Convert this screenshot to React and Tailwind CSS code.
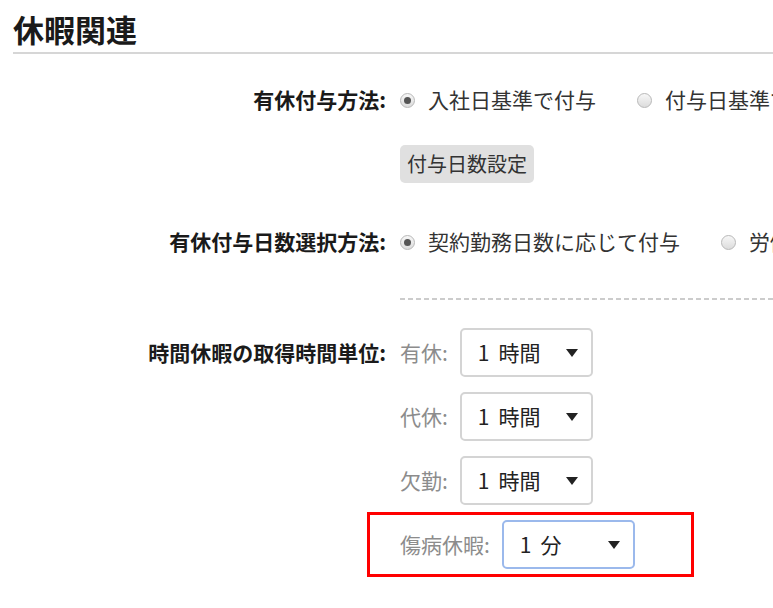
import React from "react";

const font = { fontFamily: '"Noto Sans CJK JP", "Noto Sans", sans-serif' };

function Radio({ checked, label }) {
    return (
        <label className="flex items-center gap-[13px] whitespace-nowrap shrink-0">
            <span className="w-[15px] h-[15px] rounded-full border border-[#b8b8b8] bg-[linear-gradient(#f7f7f7,#dcdcdc)] flex items-center justify-center shrink-0">
                {checked && <span className="w-[7px] h-[7px] rounded-full bg-[#555555]" />}
            </span>
            <span className="text-[21px] text-[#333333]">{label}</span>
        </label>
    );
}

function Select({ num, unit, focused }) {
    return (
        <div
            className={
                "w-[133px] h-[49px] shrink-0 rounded-[5px] border-2 bg-white flex items-center justify-between pl-[16px] pr-[13px] " +
                (focused ? "border-[#9bb9ec]" : "border-[#d4d4d4]")
            }
        >
            <span className="text-[21px] text-[#222222] whitespace-nowrap">
                {num}
                <span className="ml-[9px]">{unit}</span>
            </span>
            <svg width="12" height="8" viewBox="0 0 12 8">
                <path d="M0 0 L12 0 L6 8 Z" fill="#222222" />
            </svg>
        </div>
    );
}

const units = [
    { key: "有休", num: "1", unit: "時間" },
    { key: "代休", num: "1", unit: "時間" },
    { key: "欠勤", num: "1", unit: "時間" },
    { key: "傷病休暇", num: "1", unit: "分", focused: true },
];

export default function App() {
    return (
        <div className="w-[773px] h-[608px] bg-white overflow-hidden" style={font}>
            <div className="ml-[13px] h-[54px] pt-[4px] border-b-2 border-[#d6d6d6] flex items-center">
                <h1 className="text-[31px] font-bold text-[#1a1a1a] leading-none">休暇関連</h1>
            </div>

            <div className="flex items-center h-[40px] mt-[26px]">
                <div className="w-[386px] shrink-0 text-right text-[21px] font-bold text-[#1a1a1a] whitespace-nowrap">有休付与方法:</div>
                <div className="ml-[14px] flex items-center gap-[41px]">
                    <Radio checked label="入社日基準で付与" />
                    <Radio label="付与日基準で付与" />
                </div>
            </div>

            <div className="ml-[400px] mt-[25px]">
                <button className="h-[38px] px-[7px] rounded-[5px] bg-[#e0e0e0] text-[20px] text-[#333333]">付与日数設定</button>
            </div>

            <div className="flex items-center h-[40px] mt-[39px]">
                <div className="w-[386px] shrink-0 text-right text-[21px] font-bold text-[#1a1a1a] whitespace-nowrap">有休付与日数選択方法:</div>
                <div className="ml-[14px] flex items-center gap-[41px]">
                    <Radio checked label="契約勤務日数に応じて付与" />
                    <Radio label="労働日数に応じて付与" />
                </div>
            </div>

            <div className="ml-[400px] mt-[36px] h-[2px] bg-[repeating-linear-gradient(to_right,#cccccc_0,#cccccc_5px,transparent_5px,transparent_8px)]" />

            <div className="flex mt-[28px]">
                <div className="w-[386px] shrink-0 h-[49px] flex items-center justify-end text-[21px] font-bold text-[#1a1a1a] whitespace-nowrap">
                    時間休暇の取得時間単位:
                </div>
                <div className="ml-[14px] flex flex-col gap-[15px]">
                    {units.map((u) => (
                        <div key={u.key} className="relative flex items-center gap-[12px]">
                            <span className="text-[21px] text-[#8c8c8c] whitespace-nowrap">{u.key}:</span>
                            <Select num={u.num} unit={u.unit} focused={u.focused} />
                            {u.focused && (
                                <div className="absolute -left-[33px] -top-[8px] w-[327px] h-[65px] border-[3px] border-[#ff0000]" />
                            )}
                        </div>
                    ))}
                </div>
            </div>
        </div>
    );
}
